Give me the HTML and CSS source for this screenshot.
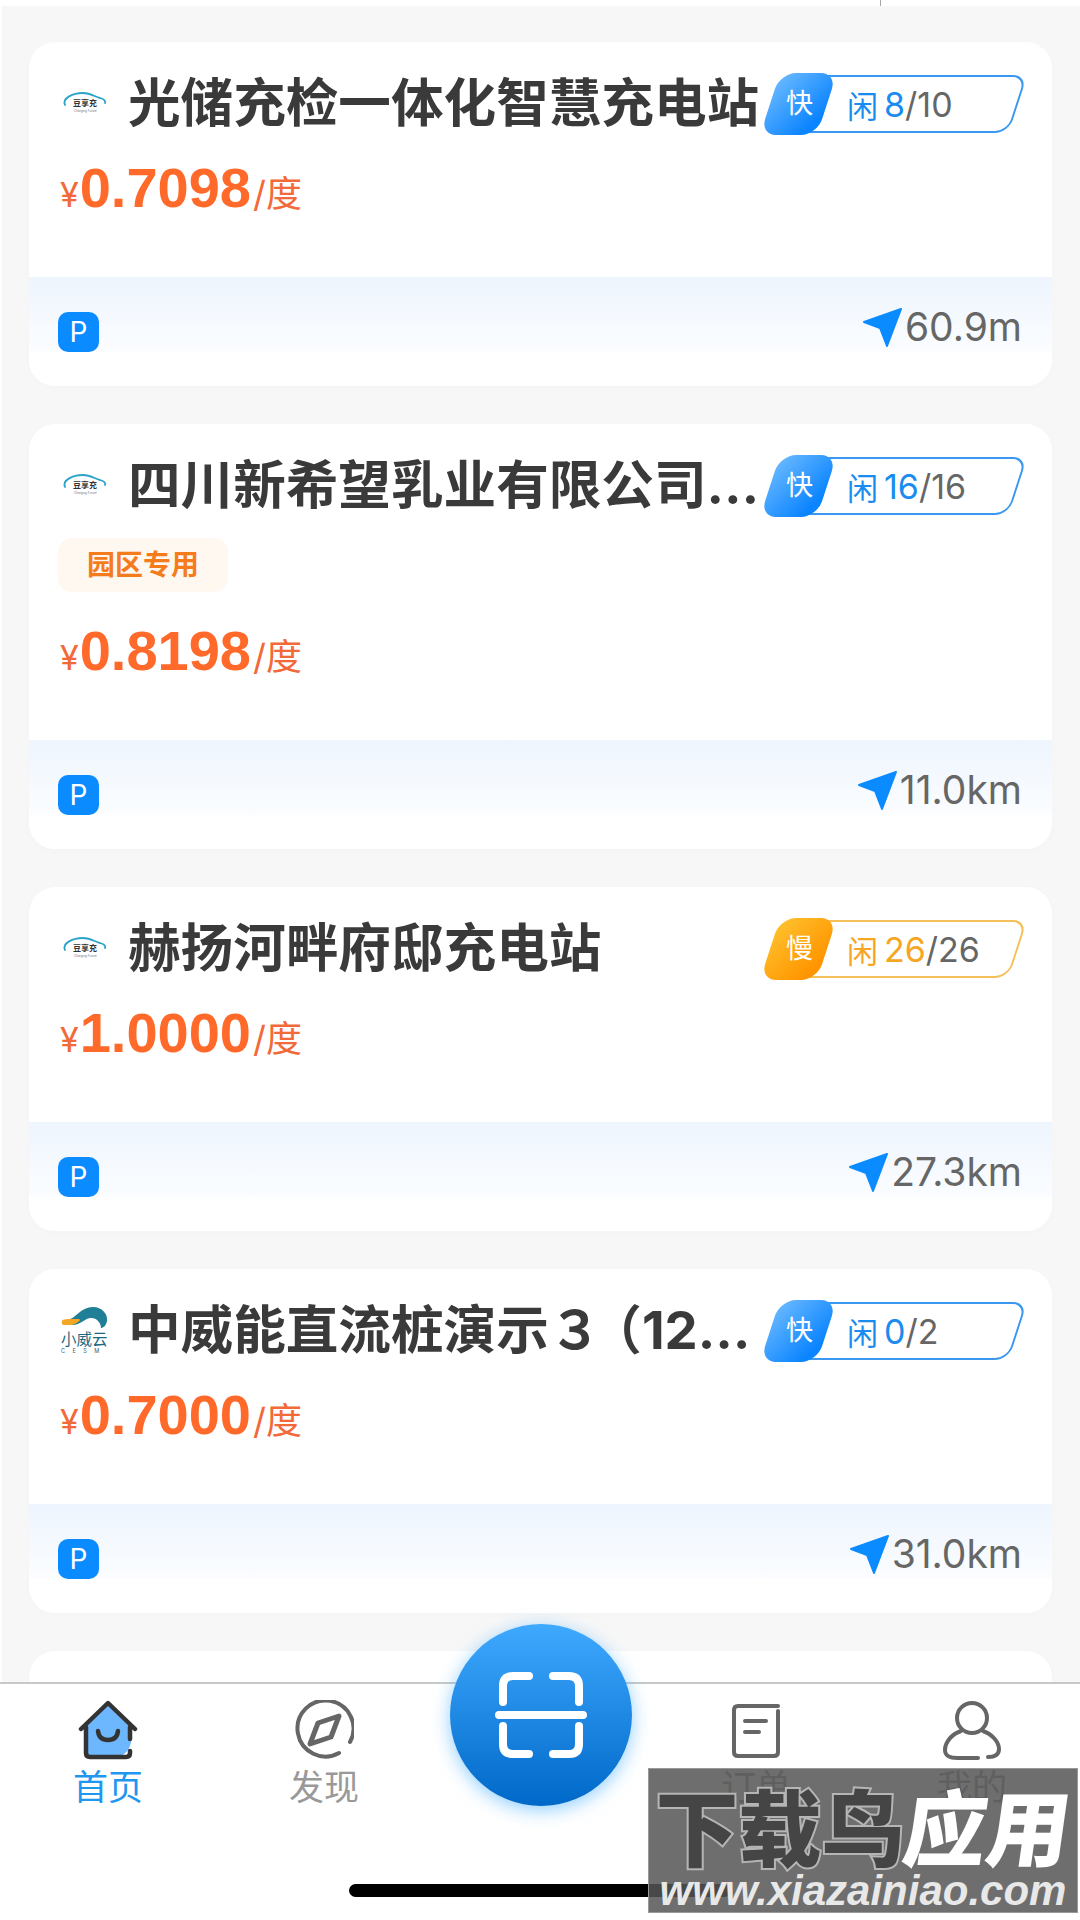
FILE: index.html
```html
<!DOCTYPE html>
<html lang="zh-CN">
<head>
    <meta charset="UTF-8">
    <meta name="viewport" content="width=device-width, initial-scale=1.0">
    <link rel="stylesheet" href="styles.css">
    <title>充电站列表</title>
</head>
<body>
    <div class="screen">
        <div class="top-strip"><span class="top-tick"></span></div>

        <div class="station-list">
            <div class="card">
                <div class="card-main">
                    <div class="title-row">
                        <svg class="logo" viewBox="0 0 54 50">
                            <path class="logo-swoosh" d="M7 27C4 20 15 15 25 15C33 15 37 19 42 20C46 21 48 23 47 25"/>
                            <text class="logo-name" x="15" y="28">豆享充</text>
                            <text class="logo-sub" x="16" y="34">Charging Future</text>
                        </svg>
                        <div class="title">光储充检一体化智慧充电站</div>
                        <div class="badge">
                            <span class="badge-type">快</span>
                            <span class="badge-label">闲</span>
                            <span class="badge-free">8</span><span class="badge-total">/10</span>
                        </div>
                    </div>
                    <div class="price"><span class="price-unit">¥</span><span class="price-num">0.7098</span><span class="price-per">/度</span></div>
                </div>
                <div class="card-footer">
                    <span class="park-icon">P</span>
                    <div class="distance">
                        <svg class="nav-icon" viewBox="0 0 40 40"><path d="M39 2L2 15L18 21L25 39Z"/></svg>
                        <span>60.9m</span>
                    </div>
                </div>
            </div>

            <div class="card">
                <div class="card-main">
                    <div class="title-row">
                        <svg class="logo" viewBox="0 0 54 50">
                            <path class="logo-swoosh" d="M7 27C4 20 15 15 25 15C33 15 37 19 42 20C46 21 48 23 47 25"/>
                            <text class="logo-name" x="15" y="28">豆享充</text>
                            <text class="logo-sub" x="16" y="34">Charging Future</text>
                        </svg>
                        <div class="title">四川新希望乳业有限公司充电站</div>
                        <div class="badge">
                            <span class="badge-type">快</span>
                            <span class="badge-label">闲</span>
                            <span class="badge-free">16</span><span class="badge-total">/16</span>
                        </div>
                    </div>
                    <div class="tag">园区专用</div>
                    <div class="price"><span class="price-unit">¥</span><span class="price-num">0.8198</span><span class="price-per">/度</span></div>
                </div>
                <div class="card-footer">
                    <span class="park-icon">P</span>
                    <div class="distance">
                        <svg class="nav-icon" viewBox="0 0 40 40"><path d="M39 2L2 15L18 21L25 39Z"/></svg>
                        <span>11.0km</span>
                    </div>
                </div>
            </div>

            <div class="card">
                <div class="card-main">
                    <div class="title-row">
                        <svg class="logo" viewBox="0 0 54 50">
                            <path class="logo-swoosh" d="M7 27C4 20 15 15 25 15C33 15 37 19 42 20C46 21 48 23 47 25"/>
                            <text class="logo-name" x="15" y="28">豆享充</text>
                            <text class="logo-sub" x="16" y="34">Charging Future</text>
                        </svg>
                        <div class="title">赫扬河畔府邸充电站</div>
                        <div class="badge badge-slow">
                            <span class="badge-type">慢</span>
                            <span class="badge-label">闲</span>
                            <span class="badge-free">26</span><span class="badge-total">/26</span>
                        </div>
                    </div>
                    <div class="price"><span class="price-unit">¥</span><span class="price-num">1.0000</span><span class="price-per">/度</span></div>
                </div>
                <div class="card-footer">
                    <span class="park-icon">P</span>
                    <div class="distance">
                        <svg class="nav-icon" viewBox="0 0 40 40"><path d="M39 2L2 15L18 21L25 39Z"/></svg>
                        <span>27.3km</span>
                    </div>
                </div>
            </div>

            <div class="card">
                <div class="card-main">
                    <div class="title-row">
                        <svg class="logo" viewBox="0 0 54 50">
                            <path class="logo-teal" d="M10 15C18 13 23 2 35 2C44 2 50 9 49 16C48 21 45 23 43 23C43 18 39 13 33 13C27 13 23 20 14 20Z"/>
                            <path class="logo-orange" d="M4 16C5 14 9 14 20 14C23 14 22 16 20 17C16 20 13 20 9 20H6Q3 20 4 16Z"/>
                            <text class="logo-cloud" x="3" y="40">小威云</text>
                            <text class="logo-cesm" x="3" y="48">CESM</text>
                        </svg>
                        <div class="title">中威能直流桩演示３<span class="title-paren">（</span>120kW）</div>
                        <div class="badge">
                            <span class="badge-type">快</span>
                            <span class="badge-label">闲</span>
                            <span class="badge-free">0</span><span class="badge-total">/2</span>
                        </div>
                    </div>
                    <div class="price"><span class="price-unit">¥</span><span class="price-num">0.7000</span><span class="price-per">/度</span></div>
                </div>
                <div class="card-footer">
                    <span class="park-icon">P</span>
                    <div class="distance">
                        <svg class="nav-icon" viewBox="0 0 40 40"><path d="M39 2L2 15L18 21L25 39Z"/></svg>
                        <span>31.0km</span>
                    </div>
                </div>
            </div>

            <div class="card card-peek"></div>
        </div>

        <div class="tabbar">
            <div class="tab tab-active">
                <svg class="tab-icon" viewBox="0 0 60 60">
                    <path class="home-fill" d="M30 5L50 25Q53 28 53 34V42Q52 51 43 56H13Q7 54 7 48V27Z"/>
                    <path class="home-line" d="M3 29L30 3L57 29M8 27V53Q8 57 12 57H48Q52 57 52 53V51M52 27V39"/>
                    <path class="home-line" d="M20 31Q21 40 30 40Q39 40 40 31"/>
                </svg>
                <span>首页</span>
            </div>
            <div class="tab">
                <svg class="tab-icon" viewBox="0 0 60 60">
                    <path class="tab-line" d="M45 53A28 28 0 1 1 56 42"/>
                    <path class="tab-line compass" d="M45 16L37 37L16 44L24 23Z"/>
                </svg>
                <span>发现</span>
            </div>
            <div class="tab tab-spacer"></div>
            <div class="tab">
                <svg class="tab-icon" viewBox="0 0 60 60">
                    <path class="tab-line" d="M52 6H12Q8 6 8 10V52Q8 56 12 56H48Q52 56 52 52V11"/>
                    <path class="tab-line" d="M19 21H40M19 32H33"/>
                </svg>
                <span>订单</span>
            </div>
            <div class="tab">
                <svg class="tab-icon" viewBox="0 0 60 60">
                    <circle class="tab-line" cx="30" cy="18" r="15"/>
                    <path class="tab-line" d="M19 31C10 34 3 42 3 50C3 57 9 58 16 58H36M46 57C52 57 57 55 57 49C57 42 50 34 41 31"/>
                </svg>
                <span>我的</span>
            </div>
        </div>

        <div class="scan-button">
            <svg class="scan-icon" viewBox="0 0 96 88">
                <path d="M36 5H20Q10 5 10 15V31M60 5H76Q86 5 86 15V31M36 83H20Q10 83 10 73V55M60 83H76Q86 83 86 73V55M6 44H90"/>
            </svg>
        </div>

        <div class="home-bar"></div>

        <div class="watermark">
            <div class="wm-title"><span class="wm-dark">下载鸟</span><span class="wm-light">应用</span></div>
            <div class="wm-url">www.xiazainiao.com</div>
        </div>
    </div>
</body>
</html>
```

FILE: styles.css
```css
* {
    box-sizing: border-box;
}

body {
    margin: 0;
    font-family: Inter, "Noto Sans CJK SC", sans-serif;
    background-color: #f7f7f7;
}

.screen {
    position: relative;
    width: 1080px;
    height: 1920px;
    overflow: hidden;
    background-color: #f7f7f7;
    box-shadow: inset 2px 0 0 #fff;
}

.top-strip {
    height: 6px;
    background-color: #fff;
    padding-left: 880px;
}

.top-tick {
    display: block;
    width: 1px;
    height: 6px;
    background-color: #aaa;
}

.station-list {
    display: flex;
    flex-direction: column;
    gap: 38px;
    padding: 36px 28px 0 29px;
}

.card {
    background-color: #fff;
    border-radius: 26px;
    overflow: hidden;
    box-shadow: 0 2px 10px rgba(0, 0, 0, 0.015);
}

.card-peek {
    height: 120px;
}

.card-main {
    padding: 30px 29px 59px;
}

.title-row {
    display: flex;
    align-items: center;
    height: 62px;
}

.logo {
    flex: none;
    width: 54px;
    height: 50px;
    margin-right: 16px;
}

.logo-swoosh {
    fill: none;
    stroke: #2ba3c9;
    stroke-width: 1.8;
    stroke-linecap: round;
}

.logo-name {
    font-size: 8px;
    font-weight: 700;
    fill: #333;
}

.logo-sub {
    font-size: 3px;
    fill: #777;
}

.logo-teal {
    fill: #1f7f97;
}

.logo-orange {
    fill: #f5a623;
}

.logo-cloud {
    font-size: 15.5px;
    fill: #1d6a80;
}

.logo-cesm {
    font-size: 5.5px;
    letter-spacing: 7.5px;
    fill: #1d6a80;
}

.title {
    flex: 1;
    min-width: 0;
    margin-right: 4px;
    font-size: 52.6px;
    font-weight: 700;
    line-height: 62px;
    color: #3a3a3a;
    white-space: nowrap;
    overflow: hidden;
    text-overflow: ellipsis;
}

.title-paren {
    margin-left: -12px;
}

.badge {
    --badge-line: #3a98f0;
    --badge-num: #1a8cf0;
    --badge-from: #6cbaff;
    --badge-to: #0a84ff;
    position: relative;
    z-index: 0;
    flex: none;
    display: flex;
    align-items: center;
    width: 259px;
    height: 62px;
    margin-top: 2px;
    font-size: 34px;
}

.badge-slow {
    --badge-line: #f5bf5a;
    --badge-num: #f6a623;
    --badge-from: #ffc22e;
    --badge-to: #ff9500;
}

.badge::before {
    content: "";
    position: absolute;
    z-index: -1;
    top: 2px;
    bottom: 2px;
    left: 20px;
    right: 5px;
    border: 2px solid var(--badge-line);
    border-radius: 14px;
    transform: skewX(-18deg);
}

.badge-type {
    position: relative;
    flex: none;
    width: 69px;
    margin-right: 14px;
    padding-left: 2px;
    font-size: 27px;
    line-height: 62px;
    text-align: center;
    color: #fff;
}

.badge-type::before {
    content: "";
    position: absolute;
    z-index: -1;
    top: 0;
    bottom: 0;
    left: 6px;
    right: 6px;
    border-radius: 16px;
    background: linear-gradient(125deg, var(--badge-from), var(--badge-to) 85%);
    transform: skewX(-18deg);
}

.badge-label {
    margin-right: 6px;
    font-size: 31px;
    color: var(--badge-num);
}

.badge-free {
    color: var(--badge-num);
}

.badge-total {
    color: #666;
}

.tag {
    width: 170px;
    height: 54px;
    margin-top: 22px;
    margin-bottom: 29px;
    border-radius: 14px;
    background-color: #fff8f0;
    font-size: 28px;
    font-weight: 700;
    line-height: 54px;
    text-align: center;
    color: #f57c1c;
}

.price {
    display: flex;
    align-items: baseline;
    height: 60px;
    margin-top: 24px;
    line-height: 60px;
    color: #f2693a;
}

.price-unit {
    font-size: 34px;
    margin-left: 2px;
    margin-right: 1px;
}

.price-num {
    font-family: "Liberation Sans", sans-serif;
    font-size: 56px;
    font-weight: 700;
    color: #ff6a2b;
}

.price-per {
    font-size: 36px;
    margin-left: 2px;
}

.card-footer {
    display: flex;
    justify-content: space-between;
    align-items: flex-start;
    height: 109px;
    padding: 35px 30px 0 29px;
    background: linear-gradient(#eef5fe, #fbfdff 75px, #fff 75px);
}

.park-icon {
    width: 41px;
    height: 40px;
    border-radius: 10px;
    background-color: #0a8bff;
    font-size: 28px;
    line-height: 40px;
    text-align: center;
    color: #fff;
}

.distance {
    display: flex;
    align-items: center;
    gap: 3px;
    margin-top: -5px;
    font-size: 39px;
    line-height: 40px;
    color: #666;
}

.nav-icon {
    width: 40px;
    height: 40px;
}

.nav-icon path {
    fill: #0a8bff;
    stroke: #0a8bff;
    stroke-width: 2;
    stroke-linejoin: round;
}

.tabbar {
    position: absolute;
    left: 0;
    right: 0;
    top: 1682px;
    bottom: 0;
    display: grid;
    grid-template-columns: repeat(5, 216px);
    padding-top: 16px;
    border-top: 2px solid #c8c8c8;
    background-color: #fff;
}

.tab {
    display: flex;
    flex-direction: column;
    align-items: center;
    gap: 7px;
    font-size: 35px;
    line-height: 40px;
    color: #999;
}

.tab-active {
    color: #1f96f0;
}

.tab-icon {
    width: 60px;
    height: 60px;
}

.tab-line {
    fill: none;
    stroke: #666;
    stroke-width: 4;
    stroke-linecap: round;
    stroke-linejoin: round;
}

.compass {
    stroke-width: 5;
}

.home-fill {
    fill: #6db7ff;
}

.home-line {
    fill: none;
    stroke: #333;
    stroke-width: 4.5;
    stroke-linecap: round;
    stroke-linejoin: round;
}

.scan-button {
    position: absolute;
    left: 450px;
    top: 1624px;
    display: flex;
    align-items: center;
    justify-content: center;
    width: 182px;
    height: 182px;
    border-radius: 50%;
    background: linear-gradient(#3fa9ff, #0068c8);
    box-shadow: 0 4px 18px rgba(70, 175, 255, 0.6);
}

.scan-icon {
    width: 96px;
    height: 88px;
    fill: none;
    stroke: #fff;
    stroke-width: 8;
    stroke-linecap: round;
}

.home-bar {
    position: absolute;
    left: 349px;
    top: 1884px;
    width: 382px;
    height: 13px;
    border-radius: 7px;
    background-color: #000;
}

.watermark {
    position: absolute;
    left: 648px;
    top: 1768px;
    width: 430px;
    height: 145px;
    border: 1px solid #999;
    background-color: rgba(85, 85, 85, 0.85);
    overflow: hidden;
    text-align: center;
}

.wm-title {
    height: 90px;
    margin-top: 10px;
    font-family: "Noto Sans CJK SC", sans-serif;
    font-size: 83px;
    font-weight: 900;
    line-height: 90px;
    white-space: nowrap;
}

.wm-dark {
    color: #454545;
    -webkit-text-stroke: 4px #b5b5b5;
    paint-order: stroke fill;
}

.wm-light {
    display: inline-block;
    color: #fff;
    transform: skewX(-8deg);
}

.wm-url {
    margin-top: 2px;
    font-family: "Liberation Sans", sans-serif;
    font-size: 42px;
    font-style: italic;
    font-weight: 700;
    line-height: 40px;
    color: #e8e8e8;
    white-space: nowrap;
}
```
